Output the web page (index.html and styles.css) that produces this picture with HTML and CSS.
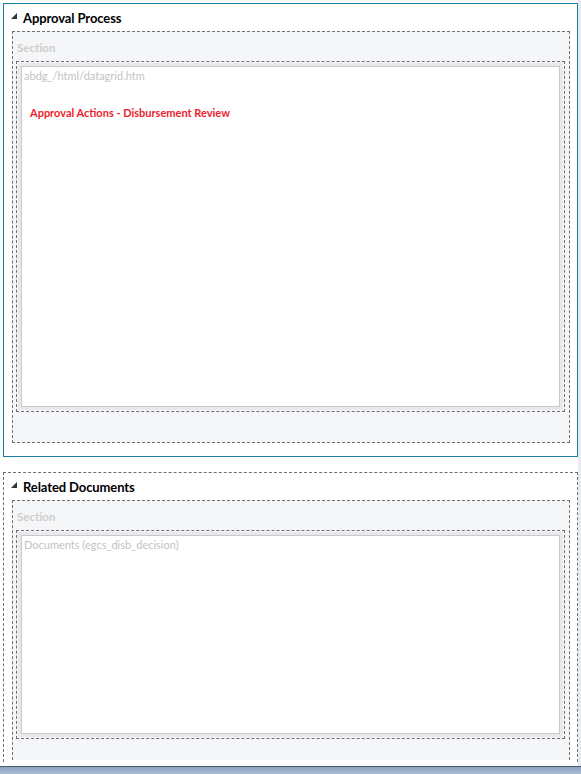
FILE: index.html
```html
<!DOCTYPE html>
<html>
<head>
<meta charset="utf-8">
<link rel="stylesheet" href="styles.css">
</head>
<body>
<div class="page">
  <div class="panel panel-active">
    <div class="panel-head">
      <svg class="tri" width="6" height="6" viewBox="0 0 6 6"><polygon points="6,0 6,6 0,6" fill="#333"/></svg>
      <span class="panel-title">Approval Process</span>
    </div>
    <div class="section s1">
      <div class="section-label">Section</div>
      <div class="cell">
        <div class="frame">
          <div class="frame-inner f1">
            <div class="frame-src">abdg_/html/datagrid.htm</div>
            <div class="frame-red">Approval Actions - Disbursement Review</div>
          </div>
        </div>
      </div>
    </div>
  </div>
  <div class="panel panel-dashed">
    <div class="panel-head">
      <svg class="tri" width="6" height="6" viewBox="0 0 6 6"><polygon points="6,0 6,6 0,6" fill="#333"/></svg>
      <span class="panel-title">Related Documents</span>
    </div>
    <div class="section s2">
      <div class="section-label">Section</div>
      <div class="cell">
        <div class="frame">
          <div class="frame-inner f2">
            <div class="frame-src">Documents (egcs_disb_decision)</div>
          </div>
        </div>
      </div>
    </div>
  </div>
</div>
<div class="bottombar"></div>
</body>
</html>
```
FILE: styles.css
```css
html, body {
  margin: 0;
  padding: 0;
  background: #ffffff;
}
body {
  width: 581px;
  height: 774px;
  overflow: hidden;
  font-family: "Lato", "Open Sans", sans-serif;
}
.page {
  height: 766px;
  overflow: hidden;
  padding: 3px 0 0 3px;
  box-sizing: border-box;
  background: linear-gradient(to right, transparent 578px, #e8ebf0 578px, #e8ebf0 581px);
}
.panel {
  width: 575px;
  box-sizing: border-box;
  background: #fff;
}
.panel-active {
  height: 454px;
  border: 1px solid #1a7fa6;
}
.panel-dashed {
  margin-top: 15px;
  height: 290px;
  border: 1px dashed #6f6f6f;
  border-bottom: none;
}
.panel-head {
  height: 27px;
  display: flex;
  align-items: center;
  padding-left: 7px;
  box-sizing: border-box;
}
.tri {
  display: block;
  margin-top: -4px;
  margin-right: 6px;
}
.panel-title {
  font-size: 13px;
  font-weight: 700;
  color: #000;
  padding-top: 1px;
  letter-spacing: -0.1px;
}
.section {
  margin: 0 7px 0 8px;
  border: 1px dashed #6f6f6f;
  background: #f5f6f8;
  box-sizing: border-box;
}
.s1 { height: 412px; }
.s2 { height: 260px; border-bottom: none; }
.section-label {
  height: 29px;
  line-height: 31px;
  padding-left: 4px;
  font-size: 11.5px;
  font-weight: 700;
  color: #cdcdcd;
}
.cell {
  margin: 0 4px 0 3px;
  border: 1px dashed #6f6f6f;
  padding: 1px;
  box-sizing: border-box;
}
.frame {
  background: #e7e9ec;
  padding: 3px 3px 3px 3px;
}
.frame-inner {
  background: #fff;
  border: 1px solid #c8c9cb;
  box-sizing: border-box;
}
.f1 { height: 341px; }
.f2 { height: 199px; }
.frame-src {
  padding: 1px 0 0 2px;
  font-size: 11px;
  color: #c3c3c3;
  line-height: 15px;
}
.frame-red {
  margin: 22px 0 0 8px;
  font-size: 11px;
  font-weight: 700;
  color: #ee1c2e;
  line-height: 15px;
}
.bottombar {
  height: 8px;
  border-top: 1px solid #4f5b6c;
  background: linear-gradient(to bottom, #8aa2c0, #a9bdd4);
  box-sizing: border-box;
}
```
